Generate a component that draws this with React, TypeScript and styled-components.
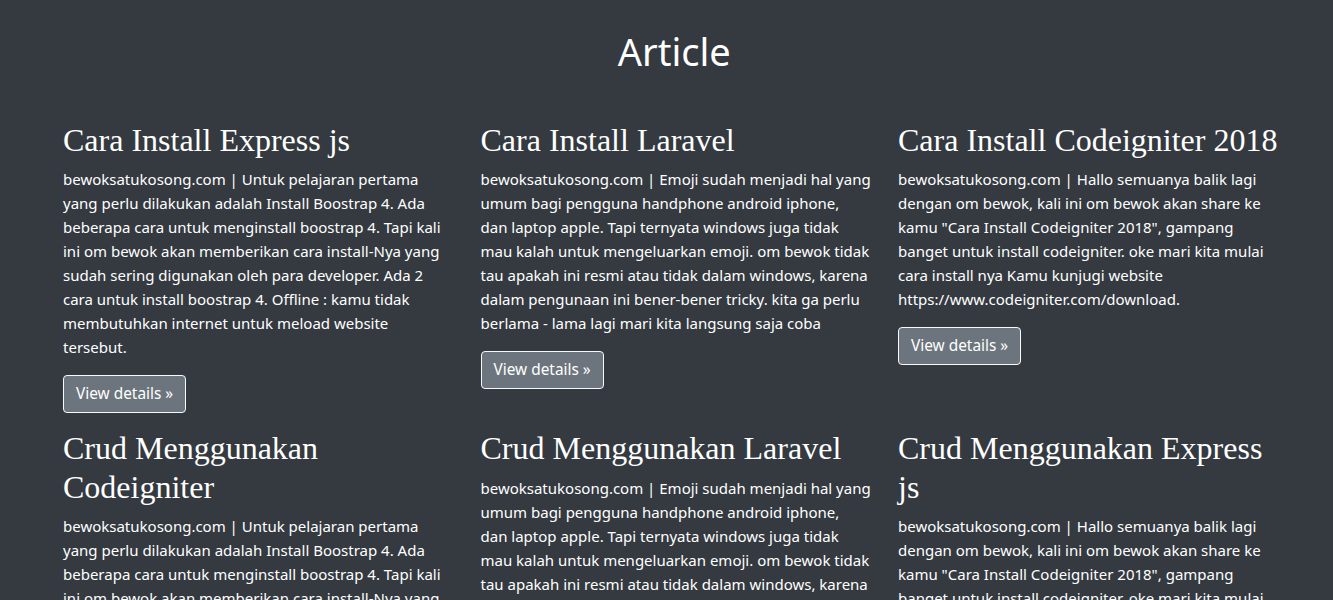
import React from "react";
import styled, { createGlobalStyle } from "styled-components";

const Global = createGlobalStyle`
  html, body { margin: 0; padding: 0; background: #343a40; }
  body {
    font-family: "Noto Sans", "Open Sans", sans-serif;
    font-size: 15px;
    line-height: 1.5;
    color: #fff;
  }
  * { box-sizing: border-box; }
`;

const Page = styled.main`
  min-height: 600px;
  background: #343a40;
  padding: 0 47.5px 0 63px;
`;

const Title = styled.h1`
  margin: 0;
  padding-top: 27px;
  height: 121px;
  text-align: center;
  font-family: "Noto Sans", sans-serif;
  font-weight: 400;
  font-size: 38px;
  line-height: 48px;
`;

const Grid = styled.div`
  display: grid;
  grid-template-columns: repeat(3, 1fr);
  column-gap: 30px;
  row-gap: 16px;
  align-items: start;
`;

const Card = styled.article`
  display: flex;
  flex-direction: column;
  align-items: flex-start;
  min-width: 0;
`;

const Heading = styled.h2`
  margin: 0 0 8px;
  font-family: "Liberation Serif", "Times New Roman", serif;
  font-weight: 400;
  font-size: 32px;
  line-height: 38.4px;
`;

const Text = styled.p`
  margin: 0 0 16px;
  font-size: 15px;
  line-height: 24px;
`;

const Line = styled.span`
  display: block;
  white-space: nowrap;
`;

const Button = styled.a`
  display: inline-block;
  padding: 6px 12px;
  font-size: 15.4px;
  line-height: 24px;
  color: #fff;
  background: #6c757d;
  border: 1px solid #f8f9fa;
  border-radius: 4px;
  text-decoration: none;
  cursor: pointer;
`;

const t1 = [
  "bewoksatukosong.com | Untuk pelajaran pertama",
  "yang perlu dilakukan adalah Install Boostrap 4. Ada",
  "beberapa cara untuk menginstall boostrap 4. Tapi kali",
  "ini om bewok akan memberikan cara install-Nya yang",
  "sudah sering digunakan oleh para developer. Ada 2",
  "cara untuk install boostrap 4. Offline : kamu tidak",
  "membutuhkan internet untuk meload website",
  "tersebut.",
];
const t2 = [
  "bewoksatukosong.com | Emoji sudah menjadi hal yang",
  "umum bagi pengguna handphone android iphone,",
  "dan laptop apple. Tapi ternyata windows juga tidak",
  "mau kalah untuk mengeluarkan emoji. om bewok tidak",
  "tau apakah ini resmi atau tidak dalam windows, karena",
  "dalam pengunaan ini bener-bener tricky. kita ga perlu",
  "berlama - lama lagi mari kita langsung saja coba",
];
const t3 = [
  "bewoksatukosong.com | Hallo semuanya balik lagi",
  "dengan om bewok, kali ini om bewok akan share ke",
  "kamu \"Cara Install Codeigniter 2018\", gampang",
  "banget untuk install codeigniter. oke mari kita mulai",
  "cara install nya Kamu kunjugi website",
  "https://www.codeigniter.com/download.",
];

const articles = [
  { title: "Cara Install Express js", lines: t1 },
  { title: "Cara Install Laravel", lines: t2 },
  { title: "Cara Install Codeigniter 2018", lines: t3 },
  { title: "Crud Menggunakan Codeigniter", lines: t1 },
  { title: "Crud Menggunakan Laravel", lines: t2 },
  { title: "Crud Menggunakan Express js", lines: t3 },
];

export default function App() {
  return (
    <>
      <Global />
      <Page>
        <Title>Article</Title>
        <Grid>
          {articles.map((a) => (
            <Card key={a.title}>
              <Heading>{a.title}</Heading>
              <Text>
                {a.lines.map((l, i) => (
                  <Line key={i}>{l} </Line>
                ))}
              </Text>
              <Button href="#">View details »</Button>
            </Card>
          ))}
        </Grid>
      </Page>
    </>
  );
}
